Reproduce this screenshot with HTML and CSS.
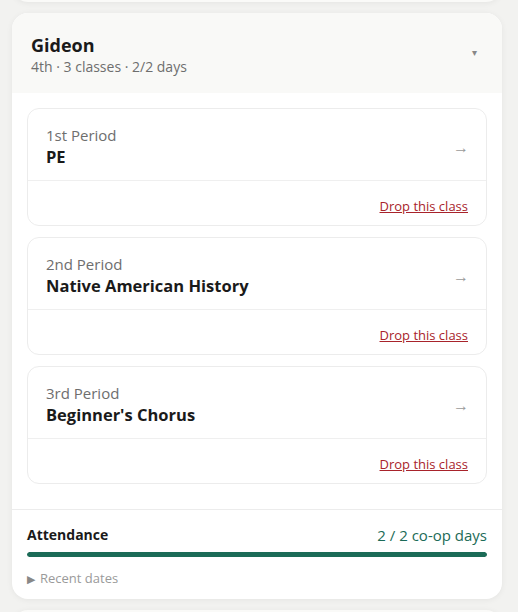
FILE: index.html
```html
<!DOCTYPE html>
<html lang="en">
<head>
    <meta charset="UTF-8">
    <meta name="viewport" content="width=device-width, initial-scale=1.0">
    <title>Students</title>
    <link rel="stylesheet" href="styles.css">
</head>
<body>

    <div class="page">
        <!-- previous student (scrolled off) -->
        <div class="student-card stub"></div>

        <div class="student-card">
            <div class="student-head">
                <div>
                    <div class="student-name">Gideon</div>
                    <div class="student-meta">4th · 3 classes · 2/2 days</div>
                </div>
                <span class="caret">▾</span>
            </div>

            <div class="class-list">
                <div class="class-item">
                    <div class="class-top">
                        <div>
                            <div class="period">1st Period</div>
                            <div class="class-name">PE</div>
                        </div>
                        <span class="arrow">→</span>
                    </div>
                    <div class="class-bottom">
                        <a href="#" class="drop-link">Drop this class</a>
                    </div>
                </div>

                <div class="class-item">
                    <div class="class-top">
                        <div>
                            <div class="period">2nd Period</div>
                            <div class="class-name">Native American History</div>
                        </div>
                        <span class="arrow">→</span>
                    </div>
                    <div class="class-bottom">
                        <a href="#" class="drop-link">Drop this class</a>
                    </div>
                </div>

                <div class="class-item">
                    <div class="class-top">
                        <div>
                            <div class="period">3rd Period</div>
                            <div class="class-name">Beginner's Chorus</div>
                        </div>
                        <span class="arrow">→</span>
                    </div>
                    <div class="class-bottom">
                        <a href="#" class="drop-link">Drop this class</a>
                    </div>
                </div>
            </div>

            <div class="attendance">
                <div class="att-row">
                    <span class="att-label">Attendance</span>
                    <span class="att-count">2 / 2 co-op days</span>
                </div>
                <div class="att-bar"><div class="att-fill" style="width: 100%;"></div></div>
                <div class="recent"><span class="tri">▶</span>Recent dates</div>
            </div>
        </div>

        <!-- next student -->
        <div class="student-card stub-next"></div>
    </div>

</body>
</html>
```

FILE: styles.css
```css
 body {
     margin: 0;
     background-color: #f2f2f0;
     font-family: "Open Sans", "Noto Sans", sans-serif;
     color: #1a1a1a;
     overflow: hidden;
 }
 .page {
     display: flex;
     flex-direction: column;
     gap: 11px;
     padding: 0 16px 0 12px;
 }
 .student-card {
     background-color: white;
     border-radius: 16px;
     box-shadow: 0 1px 6px rgba(0, 0, 0, 0.06);
     overflow: hidden;
 }
 .stub {
     height: 40px;
     margin-top: -38px;
     background-color: #fafaf8;
 }
 .stub-next {
     height: 40px;
     background-color: #fafaf8;
 }
 .student-head {
     display: flex;
     justify-content: space-between;
     align-items: center;
     background-color: #f9f9f7;
     padding: 20px 25px 16px 19px;
 }
 .student-name {
     font-size: 18px;
     font-weight: bold;
     line-height: 24px;
 }
 .student-meta {
     font-size: 14px;
     line-height: 20px;
     color: #6e6e6e;
 }
 .caret {
     font-size: 10px;
     color: #888;
     margin-top: -6px;
 }
 .class-list {
     display: flex;
     flex-direction: column;
     gap: 11px;
     padding: 15px 15px 25px;
 }
 .class-item {
     border: 1px solid #ececec;
     border-radius: 12px;
 }
 .class-top {
     display: flex;
     justify-content: space-between;
     align-items: center;
     padding: 16px 17px 11px 18px;
     border-bottom: 1px solid #efefef;
 }
 .period {
     font-size: 15px;
     line-height: 20px;
     color: #6e6e6e;
 }
 .class-name {
     font-size: 16.5px;
     font-weight: bold;
     line-height: 24px;
 }
 .arrow {
     font-size: 16px;
     color: #9a9a9a;
 }
 .class-bottom {
     display: flex;
     justify-content: flex-end;
     padding: 15px 18px 9px;
 }
 .drop-link {
     font-size: 13px;
     line-height: 20px;
     color: #a8232b;
 }
 .attendance {
     border-top: 1px solid #ececec;
     padding: 15px 15px 10px;
 }
 .att-row {
     display: flex;
     justify-content: space-between;
     align-items: center;
     line-height: 20px;
 }
 .att-label {
     font-size: 14px;
     font-weight: bold;
 }
 .att-count {
     font-size: 15px;
     color: #1b6b57;
 }
 .att-bar {
     margin-top: 7px;
     height: 5px;
     border-radius: 3px;
     background-color: #e6e6e6;
     overflow: hidden;
 }
 .att-fill {
     height: 100%;
     background-color: #1b6b57;
     border-radius: 3px;
 }
 .recent {
     margin-top: 11px;
     font-size: 13px;
     line-height: 20px;
     color: #9a9a9a;
 }
 .tri {
     font-size: 11px;
     color: #888;
     margin-right: 5px;
 }
```
